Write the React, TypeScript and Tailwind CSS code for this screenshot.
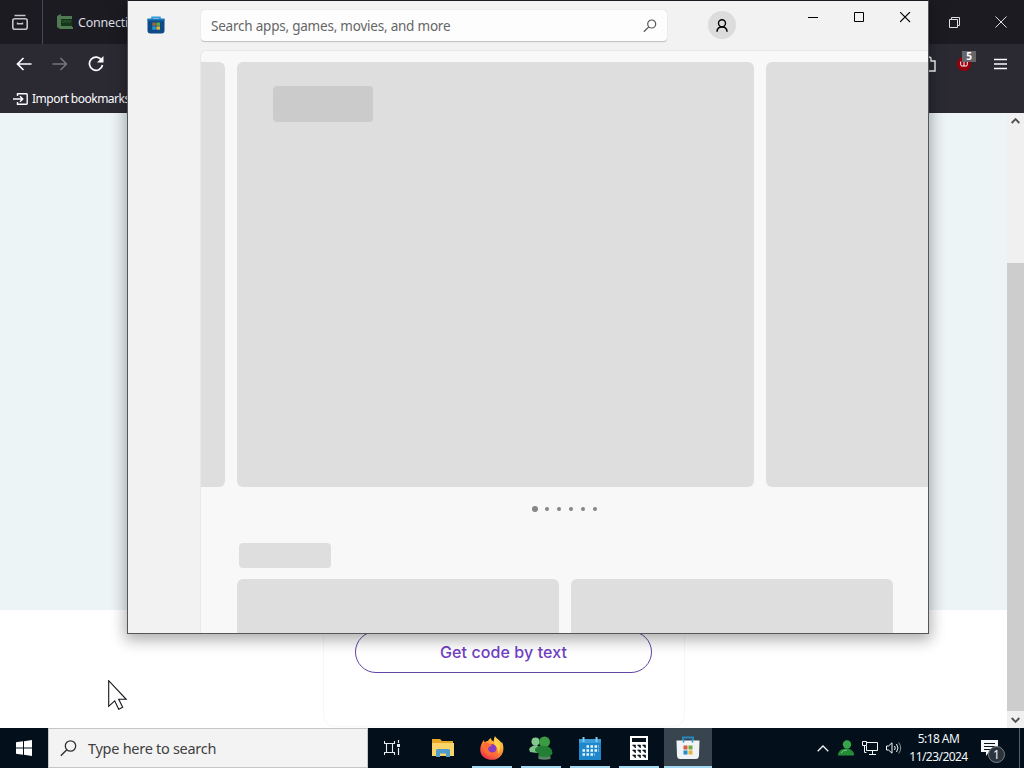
import type { ReactNode } from 'react';

// Small wrapper so every glyph shares the same stroke defaults
function Glyph({ w, h, className = '', children }: { w: number; h: number; className?: string; children: ReactNode }) {
  return (
    <svg
      width={w}
      height={h}
      viewBox={`0 0 ${w} ${h}`}
      fill="none"
      stroke="currentColor"
      className={`block shrink-0 ${className}`}
    >
      {children}
    </svg>
  );
}

function BrowserTabs() {
  return (
    <div className="flex h-11 shrink-0 items-center bg-[#1c1b22] text-[#fbfbfe]">
      <div className="flex h-11 w-[43px] items-center border-r border-[#4a4951] pl-3">
        <Glyph w={16} h={17} className="text-[#c4c4ca]">
          <path d="M2.5 1.5h11" strokeWidth="1.5" />
          <rect x="0.8" y="4.8" width="14.4" height="10.4" rx="2" strokeWidth="1.6" />
          <path d="M5.5 8.5v1.3h5V8.5" strokeWidth="1.4" />
        </Glyph>
      </div>
      <div className="flex flex-1 items-center pl-[14px]">
        <Glyph w={16} h={16}>
          <path d="M0 2l4-2v2h11v11h1v2H3l-3-2z" fill="#4f7a52" stroke="none" />
          <path d="M4 5h11v7H4z" fill="#17351a" stroke="none" />
          <path d="M5 6l1.5 3L8 6l1.5 3L11 6l1.5 3L14 6" stroke="#2c5a30" />
        </Glyph>
        <span className="mt-0.5 ml-[5px] text-[12.5px] tracking-[-0.2px] text-[#dddde2]">Connection</span>
      </div>
      <div className="flex items-center gap-[35px] pr-[17px] text-[#dedee2]">
        <Glyph w={11} h={11}>
          <path d="M.5 2.5h8v8h-8zM2.5 2.5v-2h8v8h-2" />
        </Glyph>
        <Glyph w={12} h={12}>
          <path d="M.5.5l11 11M11.5.5l-11 11" />
        </Glyph>
      </div>
    </div>
  );
}

function BrowserToolbar() {
  return (
    <div className="flex h-[41px] shrink-0 items-center justify-between bg-[#2b2a33] pb-0.5 text-[#fbfbfe]">
      <div className="flex items-center gap-[21px] pl-4">
        <Glyph w={16} h={14}>
          <path d="M15.5 7h-14M7.5 1l-6 6 6 6" strokeWidth="1.7" />
        </Glyph>
        <Glyph w={16} h={14} className="-ml-px text-[#77767e]">
          <path d="M.5 7h14M8.5 1l6 6-6 6" strokeWidth="1.5" />
        </Glyph>
        <Glyph w={16} h={16} className="-ml-px">
          <path d="M13.8 4.5A6.6 6.6 0 1 0 14.5 9" strokeWidth="1.7" />
          <path d="M15.5 0v6.5H9z" fill="currentColor" stroke="none" />
        </Glyph>
      </div>
      <div className="flex items-center pr-[17px]">
        <Glyph w={15} h={16}>
          <path d="M1 5h5V3a2 2 0 0 1 4 0v2h4v10H1z" strokeWidth="1.4" />
        </Glyph>
        <div className="relative ml-[21px] size-4">
          <div className="mt-px flex size-[14px] items-center justify-center rounded-full bg-[#96000c]">
            <Glyph w={8} h={6}>
              <path d="M.7.5v3.3q0 1.2 1.2 1.2H4V1M4 5h2.1q1.2 0 1.2-1.2V.5" />
            </Glyph>
          </div>
          <span className="absolute -top-[5px] left-[5px] flex h-[11px] w-[14px] items-center justify-center bg-[#66656a] text-[10px] leading-none font-bold text-white">
            5
          </span>
        </div>
        <Glyph w={13} h={12} className="ml-[21px]">
          <path d="M0 1.5h13M0 6h13M0 10.5h13" strokeWidth="1.5" />
        </Glyph>
      </div>
    </div>
  );
}

function BookmarksBar() {
  return (
    <div className="flex h-[28px] shrink-0 items-center bg-[#2b2a33] pl-[13px] text-[#fbfbfe]">
      <Glyph w={15} h={12}>
        <path d="M4.5 3V.8h9a.7.7 0 0 1 .7.7v9a.7.7 0 0 1-.7.7h-9V9M0 6h9.5M7 3.2L9.8 6 7 8.8" strokeWidth="1.4" />
      </Glyph>
      <span className="ml-1 text-[12px] tracking-[-0.5px] whitespace-nowrap">Import bookmarks…</span>
    </div>
  );
}

function PageScrollbar() {
  return (
    <div className="flex w-[17px] shrink-0 flex-col items-center bg-[#f0f0f0] text-[#505050]">
      <div className="flex h-[17px] items-center pb-0.5">
        <Glyph w={9} h={6}>
          <path d="M.7 5l3.8-3.8L8.3 5" strokeWidth="1.9" />
        </Glyph>
      </div>
      <div className="mt-[133px] h-[448px] w-full bg-[#cdcdcd]" />
      <div className="flex flex-1 items-center">
        <Glyph w={9} h={6}>
          <path d="M.7 1l3.8 3.8L8.3 1" strokeWidth="1.9" />
        </Glyph>
      </div>
    </div>
  );
}

function BrowserPage() {
  return (
    <div className="flex h-[615px] shrink-0">
      <div className="flex flex-1 flex-col items-center bg-white">
        <div className="h-[497px] w-full shrink-0 bg-[#ecf4f6]" />
        <div className="flex h-[117px] w-[362px] justify-center rounded-b-xl border border-t-0 border-[#f7f7f7] pt-[21px]">
          <button className="h-[42px] w-[297px] rounded-full border border-[#6344a5] font-['Inter'] text-[16px] leading-none font-medium tracking-[0.1px] text-[#7040c4]">
            Get code by text
          </button>
        </div>
      </div>
      <PageScrollbar />
    </div>
  );
}

function StoreBag() {
  return (
    <Glyph w={18} h={18}>
      <path d="M5 3.5V1.2h8v2.3" stroke="#2b9be0" strokeWidth="1.5" />
      <path d="M.5 3h17v11.5a3 3 0 0 1-3 3h-11a3 3 0 0 1-3-3z" fill="#0c4a88" stroke="none" />
      <path d="M.5 2.5h17v2H.5z" fill="#1678ba" stroke="none" />
      <path d="M5.3 6.5h3.5v3.3H5.3z" fill="#a0683c" stroke="none" />
      <path d="M9.4 6.5H13v3.3H9.4z" fill="#69a83f" stroke="none" />
      <path d="M5.3 10.4h3.5v3.3H5.3z" fill="#279dd2" stroke="none" />
      <path d="M9.4 10.4H13v3.3H9.4z" fill="#e3b53c" stroke="none" />
    </Glyph>
  );
}

function StoreTitleBar() {
  return (
    <div className="flex h-[49px] shrink-0 bg-[#f2f2f2] text-black">
      <div className="w-[73px] pt-[15px] pl-[19px]">
        <StoreBag />
      </div>
      <div className="mt-[9px] flex h-8 w-[466px] items-center justify-between rounded border-b border-[#c4c4c4] bg-[#fdfdfd] pr-[10px] pl-[10px] shadow-[0_0_1px_#bbb]">
        <span className="mt-0.5 text-[13.5px] tracking-[-0.22px] text-[#666]">Search apps, games, movies, and more</span>
        <Glyph w={14} h={14} className="mt-px text-[#555]">
          <circle cx="8.7" cy="5" r="4" strokeWidth="1.2" />
          <path d="M5.8 7.9L.8 12.7" strokeWidth="1.3" />
        </Glyph>
      </div>
      <div className="mt-[10px] ml-[41px] flex size-7 items-center justify-center rounded-full bg-[#dcdcdc]">
        <Glyph w={12} h={13}>
          <circle cx="6" cy="4.3" r="3.5" strokeWidth="1.4" />
          <path d="M1 12.8c0-3 1.6-4.9 5-4.9s5 1.9 5 4.9" strokeWidth="1.5" />
        </Glyph>
      </div>
      <div className="ml-[72px] flex h-[33px] items-center gap-[35px]">
        <Glyph w={11} h={11}>
          <path d="M0 5.5h10" />
        </Glyph>
        <Glyph w={11} h={11}>
          <path d="M.5.5h9v9h-9z" />
        </Glyph>
        <Glyph w={11} h={11}>
          <path d="M0 0l10 10M10 0L0 10" strokeWidth="1.1" />
        </Glyph>
      </div>
    </div>
  );
}

function StoreWindow() {
  return (
    <div className="absolute top-0 left-[127px] flex h-[634px] w-[802px] flex-col overflow-hidden border border-[#55565a] border-t-[#1b1a20] bg-[#f2f2f2] shadow-[0_4px_14px_2px_rgba(0,0,0,0.32)]">
      <StoreTitleBar />
      <div className="flex min-h-0 flex-1">
        <aside className="w-[72px] shrink-0" />
        <main className="flex min-w-0 flex-1 flex-col overflow-hidden rounded-tl-md border-t border-l border-[#e8e8e8] bg-[#f8f8f8]">
          {/* Hero carousel, still loading */}
          <div className="mt-[11px] flex h-[425px] shrink-0 gap-3">
            <div className="w-6 shrink-0 rounded-r-md bg-[#dedede]" />
            <div className="w-[517px] shrink-0 rounded-md bg-[#dedede] pt-[24px] pl-9">
              <div className="h-9 w-[100px] rounded-sm bg-[#cbcbcb]" />
            </div>
            <div className="w-[517px] shrink-0 rounded-md bg-[#dedede]" />
          </div>
          <div className="mt-[19px] flex h-[6px] shrink-0 items-center gap-2 pl-[331px]">
            <span className="-mr-px size-[6px] rounded-full bg-[#868686]" />
            {[1, 2, 3, 4, 5].map((n) => (
              <span key={n} className="size-1 rounded-full bg-[#858585]" />
            ))}
          </div>
          <div className="mt-[31px] ml-[38px] h-[25px] w-[92px] shrink-0 rounded bg-[#dedede]" />
          <div className="mt-[11px] ml-9 flex flex-1 gap-3">
            <div className="w-[322px] rounded-t-md bg-[#dedede]" />
            <div className="w-[322px] rounded-t-md bg-[#dedede]" />
          </div>
        </main>
      </div>
    </div>
  );
}

function FolderIcon() {
  return (
    <Glyph w={22} h={20}>
      <path d="M0 1h8l2 2h11v4H0z" fill="#e8a827" stroke="none" />
      <path d="M0 5h22v13H0z" fill="#f8d469" stroke="none" />
      <path d="M4 19v-6.5Q4 11 5.5 11h11q1.5 0 1.5 1.5V19h-4v-3.5H8V19z" fill="#4f9bcb" stroke="none" />
    </Glyph>
  );
}

function FirefoxIcon() {
  return (
    <svg width="24" height="24" viewBox="0 0 24 24" className="block">
      <defs>
        <linearGradient id="fox" x1="0.8" y1="0" x2="0.2" y2="1">
          <stop offset="0" stopColor="#ffe34c" />
          <stop offset="0.45" stopColor="#ff9334" />
          <stop offset="1" stopColor="#f0284c" />
        </linearGradient>
      </defs>
      <path
        d="M15 0c1 2.5 5 4 6.500 7l.5-1c3 7 1 13-3.500 16S7 24.300 3 20.500.2 11 1.500 8c.7-1.800 1.500-3 2.500-4l.6 2.500C6 5.300 7 4.800 8 5c1-2 2-2.500 3-3 0 2 1 2.500 2.500 3.500C14 3.500 14 2 15 0z"
        fill="url(#fox)"
      />
      <circle cx="12" cy="12.5" r="4.5" fill="#853bc4" />
      <path d="M4 7c2-1 4-.5 5 .8l3 .7c0 1.500-2.500 2-3.500 3-1 2 0 4 2.500 4.800 2 .6 4-.3 6-1.800-1 5-7 6-10 4-3-2.200-4-7-3-11.500z" fill="#ff6b35" />
      <path d="M15 2c2 3 5 5 5 9.500 0 3-1 5-2 6.500.8-5-1-7.500-4-9.500 1-2 1-4 1-6.500z" fill="#ffd446" />
    </svg>
  );
}

function BuddiesIcon() {
  return (
    <Glyph w={24} h={24}>
      <circle cx="6.5" cy="5.5" r="4" fill="#83c98d" stroke="none" />
      <path d="M0 13q3-4 8-4l4 5-4 3-7-1z" fill="#7fc189" stroke="none" />
      <circle cx="15.5" cy="6" r="5.5" fill="#3a9b43" stroke="none" />
      <path d="M6 13q3-4 9-3 8 0 8.500 7-1 3-3 3v1q-6 2-11 0v-4q-4-1-3.500-4z" fill="#237f34" stroke="none" />
      <path d="M9.5 20q6 2 12 0v3q-6 1.500-12 0z" fill="#5b8567" stroke="none" />
    </Glyph>
  );
}

function CalendarIcon() {
  return (
    <Glyph w={22} h={23}>
      <path d="M0 2h22v21H0z" fill="#1f88cc" stroke="none" />
      <path d="M0 2h22v4H0z" fill="#3b9dd9" stroke="none" />
      <path d="M4.5 0v5M17.5 0v5" stroke="#80cbef" strokeWidth="2" />
      <path d="M7.5 9.5H20M3.5 13.5H20M3.5 17.5H16" stroke="#e8f7ff" strokeWidth="2.5" strokeDasharray="2.5 1.5" />
    </Glyph>
  );
}

function CalculatorIcon() {
  return (
    <Glyph w={18} h={24}>
      <path d="M0 0h18v24H0z" fill="#fff" stroke="none" />
      <path d="M2 2h14v4H2z" fill="#071119" stroke="none" />
      <path
        d="M2.5 9h3v3zM7.5 9h3v3zM12.5 9h3v3zM2.5 14h3v3zM7.5 14h3v3zM12.5 14h3v3zM2.5 19h3v3zM7.5 19h3v3zM12.5 19h3v3z"
        fill="#071119"
        stroke="#071119"
        strokeWidth="0.6"
      />
    </Glyph>
  );
}

function StoreTaskIcon() {
  return (
    <Glyph w={24} h={24}>
      <path d="M7 6V1.5h10V6" stroke="#2687bd" strokeWidth="2" />
      <path d="M.5 4.5h23l-.5 15q-.3 3.500-3 3.500H4q-2.700 0-3-3.500z" fill="#f1f4f7" stroke="none" />
      <path d="M7.5 4.5v2M16.5 4.5v2" stroke="#2687bd" strokeWidth="1.5" />
      <path d="M7.5 9.5h4v4h-4z" fill="#d65c3c" stroke="none" />
      <path d="M12.5 9.5h4v4h-4z" fill="#73a83b" stroke="none" />
      <path d="M7.5 14.5h4v4h-4z" fill="#218dcc" stroke="none" />
      <path d="M12.5 14.5h4v4h-4z" fill="#e7b437" stroke="none" />
    </Glyph>
  );
}

const apps = [
  { id: 'files', icon: FolderIcon, open: false, active: false },
  { id: 'firefox', icon: FirefoxIcon, open: true, active: false },
  { id: 'buddies', icon: BuddiesIcon, open: true, active: false },
  { id: 'calendar', icon: CalendarIcon, open: true, active: false },
  { id: 'calculator', icon: CalculatorIcon, open: true, active: false },
  { id: 'store', icon: StoreTaskIcon, open: true, active: true },
];

function SystemTray() {
  return (
    <div className="ml-auto flex h-full items-center text-[#f4f7f9]">
      <Glyph w={12} h={7}>
        <path d="M.7 6.3L6 1l5.3 5.3" strokeWidth="1.3" />
      </Glyph>
      <Glyph w={17} h={16} className="ml-[9px]">
        <circle cx="9" cy="4.5" r="4.2" fill="#39a54a" stroke="none" />
        <path d="M0 14.5q1-6 8-6 6 0 8 5v2H0z" fill="#258b37" stroke="none" />
        <path d="M3 13q2-3 6-3" stroke="#73ca80" />
      </Glyph>
      <Glyph w={16} h={14} className="ml-[7px]">
        <path d="M5 1.5h10.5v8h-11V5M7 13.5h7M10.5 9.5v4M.5.5h4v4h-4zM2.5 4.5v7h2" />
      </Glyph>
      <Glyph w={16} h={14} className="ml-2">
        <path d="M.5 5h2L6 1.8v10.4L2.5 9h-2zM8.5 5q1.5 2 0 4M10.5 3q3 4 0 8" />
        <path d="M12.7 1.5q4 5.5 0 11" stroke="#87939b" />
      </Glyph>
      <div className="ml-[6px] w-[61px] text-center text-[12px] leading-[18px] tracking-[-0.55px] whitespace-nowrap">
        <div>5:18 AM</div>
        <div>11/23/2024</div>
      </div>
      <div className="relative ml-3 h-6 w-[38px] pt-1">
        <Glyph w={17} h={16}>
          <path d="M0 0h17v12H8l-3 4v-4H0z" fill="currentColor" stroke="none" />
          <path d="M3 3.5h11M3 6.5h11M3 9.5h8" stroke="#071119" />
        </Glyph>
        <span className="absolute top-[10px] left-[7px] flex size-[17px] items-center justify-center rounded-full border border-[#77808a] bg-[#2b333d] text-[12px] leading-none">
          1
        </span>
      </div>
      <div className="h-full w-[5px] border-l border-[#56616a]" />
    </div>
  );
}

function Taskbar() {
  return (
    <footer className="flex h-10 shrink-0 bg-[#03101b]">
      <div className="flex w-12 items-center justify-center">
        <Glyph w={16} h={16}>
          <path d="M0 2.3l7-1v6.2H0zM8 1.2L16 0v7.5H8zM0 8.500h7v6.2l-7-1zM8 8.500h8V16l-8-1.2z" fill="#fff" stroke="none" />
        </Glyph>
      </div>
      <div className="flex w-80 items-center border border-[#c4c7c9] bg-[#f3f3f3] pl-[11px] text-[#303030]">
        <Glyph w={17} h={17}>
          <circle cx="10.5" cy="6" r="5.2" strokeWidth="1.3" />
          <path d="M6.8 9.7l-6 6" strokeWidth="1.4" />
        </Glyph>
        <span className="mt-0.5 ml-[11px] text-[14.5px] tracking-[-0.28px] text-[#404040]">Type here to search</span>
      </div>
      <div className="flex w-[49px] items-center justify-center">
        <Glyph w={17} h={16} className="text-[#e5ebef]">
          <path d="M.5 1v2.5h10V1M.5 15v-2.5h10V15M2.5 3.5v9M8.5 3.5v9" strokeWidth="1.1" />
          <path d="M14.5 0v3M14.5 8v7" strokeWidth="1.2" />
          <path d="M13 4h3v3h-3z" fill="currentColor" stroke="none" />
        </Glyph>
      </div>
      <div className="ml-0.5 flex gap-px">
        {apps.map(({ id, icon: Icon, open, active }) => (
          <div key={id} className={`flex w-12 flex-col items-center ${active ? 'bg-[#39454e]' : ''}`}>
            <div className="flex h-[38px] items-center justify-center pt-0.5">
              <Icon />
            </div>
            {open && <div className={`h-[2px] bg-[#a3d8f2] ${active ? 'w-12' : 'w-10'}`} />}
          </div>
        ))}
      </div>
      <SystemTray />
    </footer>
  );
}

export default function App() {
  return (
    <div className="relative flex h-[768px] w-[1024px] flex-col overflow-hidden bg-white font-['Noto_Sans','Open_Sans',sans-serif]">
      <BrowserTabs />
      <BrowserToolbar />
      <BookmarksBar />
      <BrowserPage />
      <Taskbar />
      <StoreWindow />
      {/* Mouse pointer */}
      <svg width="20" height="32" viewBox="0 0 20 32" className="absolute top-[680px] left-[108px]">
        <path d="M.7.7v25.6l6-5.500 4 8.500 4-2-4-8h7.500z" fill="#fff" stroke="#15151d" strokeWidth="1.1" />
      </svg>
    </div>
  );
}
